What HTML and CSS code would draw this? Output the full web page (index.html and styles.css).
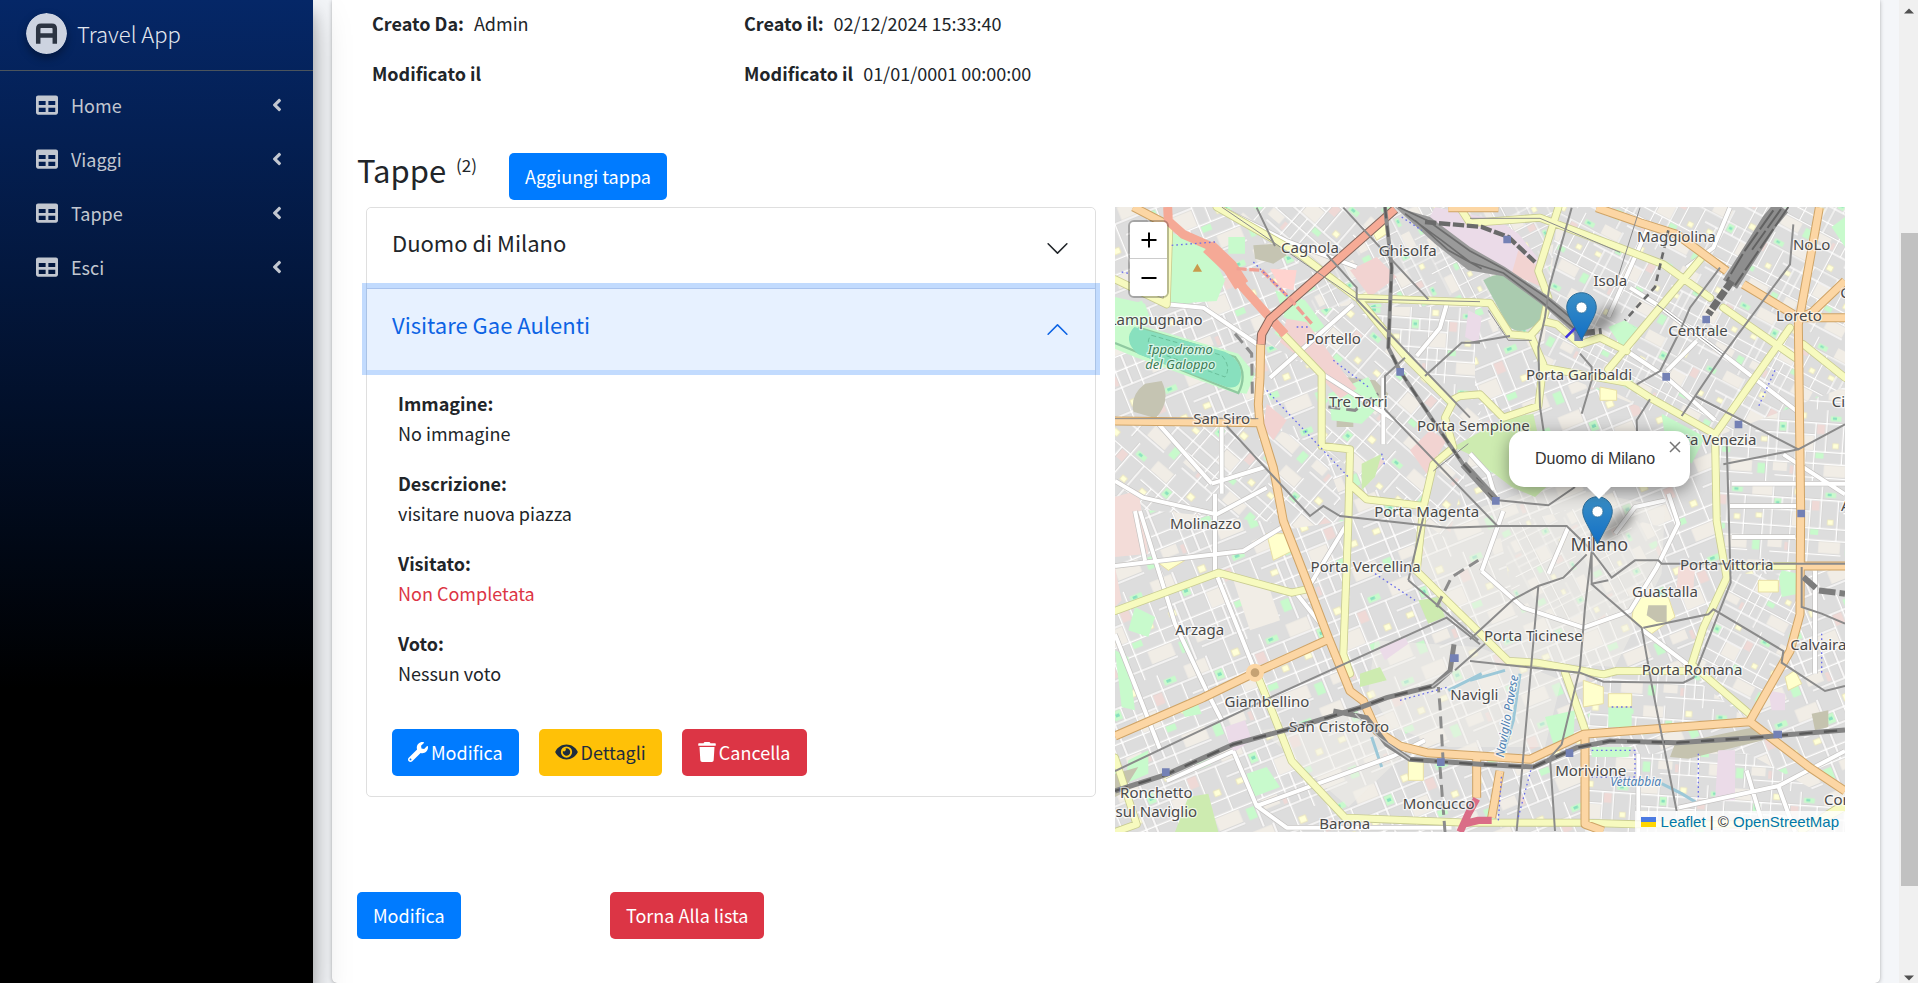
FILE: index.html
```html
<!DOCTYPE html>
<html lang="it">
<head>
<meta charset="utf-8">
<title>Travel App</title>
<link rel="stylesheet" href="styles.css">
</head>
<body>
<svg class="defs" aria-hidden="true">
  <symbol id="i-table" viewBox="0 0 512 512"><path d="M464 32H48C21.5 32 0 53.500 0 80v352c0 26.500 21.500 48 48 48h416c26.500 0 48-21.500 48-48V80c0-26.500-21.500-48-48-48zM224 416H64v-96h160v96zm0-160H64v-96h160v96zm224 160H288v-96h160v96zm0-160H288v-96h160v96z"/></symbol>
  <symbol id="i-left" viewBox="0 0 256 512"><path d="M31.700 239l136-136c9.400-9.400 24.600-9.400 33.900 0l22.600 22.600c9.400 9.400 9.400 24.600 0 33.900L127.900 256l96.400 96.400c9.400 9.400 9.400 24.600 0 33.900L201.700 409c-9.400 9.400-24.600 9.400-33.900 0l-136-136c-9.500-9.400-9.500-24.600-.1-34z"/></symbol>
  <symbol id="i-wrench" viewBox="0 0 512 512"><path d="M507.730 109.100c-2.240-9.030-13.540-12.090-20.120-5.510l-74.360 74.360-67.880-11.310-11.310-67.880 74.360-74.360c6.620-6.620 3.430-17.900-5.660-20.160-47.380-11.740-99.550.91-136.580 37.930-39.640 39.640-50.550 97.100-34.050 147.200L18.740 402.760c-24.990 24.990-24.990 65.510 0 90.500 24.990 24.990 65.510 24.990 90.500 0l213.210-213.210c50.120 16.710 107.470 5.680 147.370-34.220 37.070-37.070 49.700-89.320 37.910-136.730zM64 472c-13.250 0-24-10.750-24-24 0-13.260 10.750-24 24-24s24 10.740 24 24c0 13.250-10.750 24-24 24z"/></symbol>
  <symbol id="i-eye" viewBox="0 0 576 512"><path d="M572.520 241.400C518.290 135.590 410.930 64 288 64S57.680 135.640 3.480 241.410a32.350 32.350 0 0 0 0 29.190C57.710 376.410 165.070 448 288 448s230.320-71.640 284.520-177.410a32.350 32.350 0 0 0 0-29.190zM288 400a144 144 0 1 1 144-144 143.930 143.930 0 0 1-144 144zm0-240a95.310 95.310 0 0 0-25.310 3.790 47.850 47.850 0 0 1-66.900 66.900A95.780 95.780 0 1 0 288 160z"/></symbol>
  <symbol id="i-trash" viewBox="0 0 448 512"><path d="M432 32H312l-9.400-18.700A24 24 0 0 0 281.100 0H166.800a23.720 23.720 0 0 0-21.400 13.300L136 32H16A16 16 0 0 0 0 48v32a16 16 0 0 0 16 16h416a16 16 0 0 0 16-16V48a16 16 0 0 0-16-16zM53.200 467a48 48 0 0 0 47.900 45h245.800a48 48 0 0 0 47.900-45L416 128H32z"/></symbol>
  <symbol id="i-chev" viewBox="0 0 16 16"><path fill-rule="evenodd" d="M1.646 4.646a.5.5 0 0 1 .708 0L8 10.293l5.646-5.647a.5.5 0 0 1 .708.708l-6 6a.5.5 0 0 1-.708 0l-6-6a.5.5 0 0 1 0-.708z"/></symbol>
  <linearGradient id="pinFill" x1="0" y1="0" x2="0" y2="1"><stop offset="0" stop-color="#3a8fc6"/><stop offset="1" stop-color="#126fc6"/></linearGradient>
  <symbol id="i-pin" viewBox="0 0 31 49"><path d="M15.500 .7C7.300.7.700 7.300.700 15.400c0 3.800 1.700 7.500 3.300 10.900L15.500 48 27 26.300c1.600-3.400 3.300-7.100 3.300-10.900C30.300 7.300 23.700.7 15.500.7z" fill="url(#pinFill)" stroke="#2e6c97" stroke-width="1"/><circle cx="15.500" cy="15.500" r="5.500" fill="#fff" stroke="#2e6c97" stroke-width=".8"/></symbol>
</svg>
<div class="shell">
  <aside class="sidebar">
    <a class="brand" href="#">
      <svg class="brand-logo" viewBox="0 0 42 42" aria-hidden="true"><circle cx="21" cy="21" r="21" fill="#cdd3e0"/><path d="M12.500 31.500V16q0-3 3-3h11q3 0 3 3v15.500M12.500 23h17" fill="none" stroke="#2c3442" stroke-width="4.600"/></svg>
      <span>Travel App</span>
    </a>
    <nav class="menu">
      <a href="#"><svg class="m-icon"><use href="#i-table"/></svg><span>Home</span><svg class="m-arrow"><use href="#i-left"/></svg></a>
      <a href="#"><svg class="m-icon"><use href="#i-table"/></svg><span>Viaggi</span><svg class="m-arrow"><use href="#i-left"/></svg></a>
      <a href="#"><svg class="m-icon"><use href="#i-table"/></svg><span>Tappe</span><svg class="m-arrow"><use href="#i-left"/></svg></a>
      <a href="#"><svg class="m-icon"><use href="#i-table"/></svg><span>Esci</span><svg class="m-arrow"><use href="#i-left"/></svg></a>
    </nav>
  </aside>
  <main class="content">
    <section class="card">
      <div class="info">
        <div><b>Creato Da:</b><span>Admin</span></div>
        <div><b>Creato il:</b><span>02/12/2024 15:33:40</span></div>
        <div><b>Modificato il</b></div>
        <div><b>Modificato il</b><span>01/01/0001 00:00:00</span></div>
      </div>
      <div class="heading">
        <h3>Tappe <sup>(2)</sup></h3>
        <a class="btn primary" href="#">Aggiungi tappa</a>
      </div>
      <div class="split">
        <div class="accordion">
          <button class="acc-head" type="button" aria-expanded="false"><span>Duomo di Milano</span><svg><use href="#i-chev"/></svg></button>
          <button class="acc-head open" type="button" aria-expanded="true"><span>Visitare Gae Aulenti</span><svg><use href="#i-chev"/></svg></button>
          <div class="acc-body">
            <dl>
              <dt>Immagine:</dt><dd>No immagine</dd>
              <dt>Descrizione:</dt><dd>visitare nuova piazza</dd>
              <dt>Visitato:</dt><dd class="bad">Non Completata</dd>
              <dt>Voto:</dt><dd>Nessun voto</dd>
            </dl>
            <div class="actions">
              <a class="btn primary" href="#"><svg><use href="#i-wrench"/></svg>Modifica</a>
              <a class="btn warning" href="#"><svg class="eye"><use href="#i-eye"/></svg>Dettagli</a>
              <button class="btn danger" type="button"><svg class="trash"><use href="#i-trash"/></svg>Cancella</button>
            </div>
          </div>
        </div>
        <div class="map">
          <svg class="tiles" viewBox="0 0 2190 1875" preserveAspectRatio="xMidYMid slice" role="img" aria-label="Mappa di Milano">
            <defs>
              <pattern id="f1" width="330" height="270" patternUnits="userSpaceOnUse" patternTransform="rotate(-22)">
                <rect width="330" height="270" fill="#dddddd"/>
                <path fill="#f1ede6" d="M4 4h70v42H4zM150 94h60v52h-60zM250 190h76v44h-76zM70 194h50v30H70z"/>
                <path fill="#c8facc" d="M84 52h28v30H84zM262 20h38v18h-38zM16 202h26v36H16zM216 152h30v20h-30z"/>
                <path fill="#88e0be" d="M90 62h12v10H90zM270 24h14v8h-14z"/>
                <path fill="#ffffd8" stroke="#ece5b4" stroke-width="2" d="M154 14h22v20h-22zM22 108h24v16H22zM276 116h20v18h-20z"/>
                <path fill="#efd9d6" d="M216 52h28v34h-28zM130 204h14v28h-14z"/>
                <path fill="none" stroke="#cfcdcb" stroke-width="8" d="M0 48H330M0 90H212M0 148H330M0 190H330M78 240H330M78 0V190M146 0V270M212 48V270M250 0V148M48 90V270M310 48V190M112 48V90M180 148V240"/>
                <path fill="none" stroke="#fff" stroke-width="5" d="M0 48H330M0 90H212M0 148H330M0 190H330M78 240H330M78 0V190M146 0V270M212 48V270M250 0V148M48 90V270M310 48V190M112 48V90M180 148V240"/>
              </pattern>
              <pattern id="f2" href="#f1" patternTransform="rotate(41) scale(.9)"/>
              <pattern id="f3" href="#f1" patternTransform="rotate(4) scale(.85)"/>
              <pattern id="f4" href="#f1" patternTransform="rotate(28) scale(.8)"/>
              <pattern id="f5" href="#f1" patternTransform="rotate(63) scale(.7)"/>
            </defs>
            <rect width="2190" height="1875" fill="url(#f1)"/>
            <path fill="url(#f2)" d="M300 0H840L440 400 620 500V720L1000 1000 1100 600 720 280zM0 640H435L520 950 0 900zM440 650l180 70 80 220-200 30z"/>
            <path fill="url(#f5)" d="M840 0H1330L1280 380 1165 390 1100 290H730L470 330z"/>
            <path fill="url(#f4)" d="M1330 0H2190V560L1800 690 1280 480z"/>
            <path fill="url(#f3)" d="M1800 690L2190 540V1080H1830zM1450 1400H1720L1900 1540 1410 1590zM1420 1640h480l290 160v75h-780zM720 300h360v250L1000 580z"/>
            <path fill="url(#f4)" d="M1840 1100H2050V1250L1900 1540 1740 1380z"/>
            <path fill="url(#f5)" d="M1150 960L1400 900 1640 960 1600 1120 1420 1260 1200 1200z"/>
            <path fill="#f2efe9" opacity=".5" d="M930 960L1300 830 1650 900 1640 1100 1500 1380 1180 1360 910 1090zM780 1300L1090 1320 1340 1420 1290 1620 1000 1620 830 1560 760 1450zM440 1570L760 1510 860 1650 700 1800 540 1660z"/>
            <!-- land use -->
            <g>
              <path fill="#c8facc" d="M165 75L285 130 330 220 305 282 165 290zM480 250l90 30 60 80-60 30-60-60zM340 90h50v50h-50zM0 270l90 20 20 60-110 30z"/>
              <path fill="#c5c4b2" d="M415 115l70-5 30 35-40 25-55-15zM90 530l50-8q30 60-18 112l-67-20q-10-50 35-84zM690 510l90 10 40 40-20 40-110-40zM665 620h50v40h-50z"/>
              <path fill="#c8facc" d="M0 360L60 350 370 440 420 500 395 560 350 555 60 450 0 425zM640 560l120-50 40 80-60 60-90-10z"/>
              <path fill="none" stroke="#8fc9a0" stroke-width="7" d="M0 408L370 558Q400 500 360 450L70 362"/>
              <path fill="#88e0be" d="M58 360L330 434Q380 460 378 505T335 540L70 442Q20 400 58 360z"/>
              <path fill="none" stroke="#6bbf9b" stroke-width="3" stroke-dasharray="14 8" d="M110 385L320 445Q350 480 330 510L110 430Q90 400 110 385z"/>
              <path fill="#f2d3d1" d="M515 335l60 10 110 150 40 50-50 30-80-90-100-80zM705 190l80-40 60 60-80 60zM455 590l60 50-40 60-30-40zM885 730l60-60 50 30-60 100z"/>
              <path fill="#ffd3cf" d="M465 185l80 5-10 60-40-10z"/>
              <path fill="#ebdbe8" d="M960 0L1150 40 1210 80 1290 180 1260 195 1170 195 1065 140 940 40zM330 1560l60-20 20 60-60 40zM1060 310l40 20-10 80-40-20zM790 1320l80-30 10 20-70 50z"/>
              <path fill="#f2d3d1" d="M1210 130l60 50 10 60-90-40z"/>
              <path fill="#aacbaf" d="M1105 220Q1150 190 1210 210L1290 285Q1290 360 1215 372 1180 370 1165 330z"/>
              <path fill="#cdebb0" d="M1015 720L1165 635 1255 620 1270 690 1305 830 1260 870 1190 840 1060 740z"/>
              <path fill="#c8facc" d="M1640 620L1770 690 1730 770 1650 690zM1480 360l50-20 40 30-50 50zM2150 60l40-30v90zM2000 1090l50 10v60l-50 10-8-60zM1290 1530l90-20-5 90-60 10zM1480 1500h70v60h-70zM1430 1620h120l-10 30h-110zM60 1200l60 30-20 60-60-20zM0 1330l40 20 20 160-40-10zM395 1700l60-20 40 60-80 30zM40 1660l60-30v70l-70 30zM190 1490l50-20 20 50-50 10z"/>
              <path fill="#cdebb0" d="M735 1400l60-20 20 40-80 20zM910 1180l60-10 20 60-50 20zM220 1770l60-10 30 115h-130zM740 770l60-30-20 70-40 40z"/>
              <path fill="#f3dcd8" d="M0 870l70-20 30 190-100 10zM0 1080l20 100-20 20zM1690 1080h50l-5 70h-50z"/>
              <path fill="#ffffcc" stroke="#e8dfa5" stroke-width="3" d="M455 980l60 0 20 50-60 30zM120 1060h90l-50 30zM1560 1170l100 0 20 60-70 50-60-40zM1405 1420l60 20v50l-60 10zM1480 1460h70v40h-70zM1930 1120h60v35h-60zM1455 540l50 10v30h-50zM880 1660h45v60h-45zM2010 1410l30-20 20 40-40 20zM765 60l40-40 10 60-30 20z"/>
              <path fill="#c5c3af" d="M1680 1610L1920 1560 1945 1600 1720 1655 1665 1650zM1600 1195h55v50h-30l-30-20zM2090 1520l50-10v50l-40 10zM0 1700l70-20-50 80-20 10z"/>
              <path fill="#f1ede6" d="M355 1120l110 30 30 90-90 30z"/>
              <path fill="#ebdbe8" d="M1810 1630h50v150h-60zM1960 1450l50 10v50h-40z"/>
            </g>
            <g fill="none" stroke="#9cc8d8" stroke-width="9"><path d="M1065 1420L1170 1390M1000 1450L1100 1400M1100 1290L1180 1360M1640 1730L1700 1760 1750 1790M770 1590L800 1680M1215 1400L1195 1540 1160 1660"/></g>
            <!-- secondary streets -->
            <g fill="none" stroke-linejoin="round">
              <g stroke="#c4c2c0" stroke-width="16"><use href="#wr"/></g>
              <g stroke="#fff" stroke-width="12"><path id="wr" d="M0 1077L385 1032 515 952M75 912L180 1250 275 1452 320 1540M0 1282L135 1627M300 860V1092L420 1392M425 1797L835 1647 930 1600M355 1632L425 1797 515 1862H1010M155 1722L355 1632M155 292L265 302 435 417M465 512L715 292M335 12L515 102 725 180M0 822L85 872 305 922 455 842M905 447L975 362 995 292M805 712V512M1545 242L1625 292 1825 442 2045 612M1745 402L1655 492M1535 432L1655 512 1800 640M2005 742L2190 862M1845 2L1795 122 1715 182M1845 897H2065M1100 1092L1225 1202 1405 1262 1545 1212 1625 1082 1690 950 1660 860M1690 1802L1990 1737 2190 1632M1580 1267L1730 1382M1165 912L1100 1092M1065 740L1120 800 1135 850M575 1150L690 960M545 1160L640 1280M1990 1737L2040 1875M1895 1690L1950 1875M320 660V860M130 650L290 830M290 830L450 780M1600 60L1480 330M2100 1090V1400M1850 830H2190M1850 990H2040M60 912L90 1060M620 500L840 640M1360 960L1300 1100M1650 880L1560 900 1500 980M1570 1640V1875"/></g>
            </g>
            <!-- yellow roads -->
            <g fill="none" stroke-linejoin="round" stroke-linecap="round">
              <g stroke="#c9cc92" stroke-width="24"><use href="#yr"/></g>
              <g stroke="#f7fabf" stroke-width="19"><path id="yr" d="M305 0L555 142 725 272 1125 288 1185 382 1245 387 1285 342 1325 352 1395 412 1455 392 1535 432M735 282L875 452 1005 582 1035 567 1095 562 1165 632 1270 597 1285 472 1250 392M1035 2L1065 48 1275 32 1515 122 1645 172 1785 272M1825 302L2040 452M2065 412L2190 512M1330 2L1270 192 1300 272 1285 342M1760 152L1480 487M1285 482L1535 527 1605 572 1800 682 1805 942 1835 1112 1765 1262 1730 1372 1905 1522M1800 682L2025 362M905 1092L1180 1362 1265 1367 1465 1402 1505 1392H1745M1350 1397L1415 1582M1015 582L990 632 1015 722 955 772 925 902 905 1092M505 382L620 502V717L705 727 700 942 685 1342 705 1400M705 832L755 877 925 897M0 1212L310 1097 530 1157 575 1147M430 1412L475 1522 530 1662 690 1832 1055 1847 1405 1847 1565 1852 2100 1852 2190 1800M0 1652L65 1852 0 1875M0 217L155 292 163 52M2055 1077H1835M2060 1870L2190 1790"/></g>
            </g>
            <!-- primary roads -->
            <g fill="none" stroke-linejoin="round">
              <g stroke="#cfa467" stroke-width="27"><use href="#or"/></g>
              <g stroke="#fcd6a4" stroke-width="21"><path id="or" d="M437 412L435 512 430 592 435 652 475 782 505 942 575 1122 640 1292 705 1452 745 1482 785 1572 855 1617 935 1637 1095 1647 1245 1657 1405 1582 1665 1562 1905 1544 2085 1682 2190 1752M0 1587L265 1472 420 1397 640 1297M1905 1542L2025 1332 2055 1222 2057 912 2055 752 2050 352 2113 2M1445 2L1575 47 1685 82 1835 192M1885 232L2035 322M2050 332H2190M2050 332L2090 317 2190 222M0 642L435 647M55 0L155 52M1410 1582V1852L1465 1872M2055 1077H2190M1085 1650V1772M1155 1692L1130 1832M1000 2H1150"/></g>
              <circle cx="420" cy="1397" r="20" fill="#c5a274" stroke="#fcd6a4" stroke-width="14"/>
              <path stroke="#f5a996" stroke-width="27" d="M158 0L160 42 205 82 285 117 335 167 385 242 465 332 510 382"/>
              <path stroke="#f5a996" stroke-width="46" d="M280 118L345 180 380 235"/>
              <path stroke="#82655c" stroke-width="28" d="M840 7L465 337 440 382 438 412"/>
              <path stroke="#f6ab96" stroke-width="22" d="M840 7L465 337 440 382 438 412"/>
              <path stroke="#f0a195" stroke-width="10" stroke-dasharray="30 8" d="M365 185L440 190 520 270 590 350"/>
              <path stroke="#da6d87" stroke-width="22" d="M1035 1875L1060 1820 1085 1775M1050 1850L1090 1840H1130"/>
            </g>
            <!-- railways -->
            <g fill="none" stroke="#858585">
              <path fill="#9a9a9a" stroke="none" d="M840 0L945 30 1065 120 1170 180 1300 268 1410 355 1430 385 1380 382 1290 300 1165 208 1060 190 960 110z"/>
              <path stroke="#6d6d6d" stroke-width="5" d="M850 0L940 42 1065 132 1165 185 1295 272 1400 360M870 20L980 100 1065 165 1165 198 1280 285 1390 375M900 40L1000 130 1100 185"/>
              <path stroke="#6a6a6a" stroke-width="13" stroke-dasharray="34 8" d="M930 45L1100 60 1180 90 1260 165"/>
              <path stroke="#6a6a6a" stroke-width="8" stroke-dasharray="20 14" d="M1660 70L1620 240 1530 340"/>
              <path stroke="#8c8c8c" stroke-width="12" d="M810 0L830 182 820 422 855 492 955 642 1045 772"/>
              <path stroke="#8a8a8a" stroke-width="22" d="M1045 772L1145 882"/>
              <path stroke="#5f5f5f" stroke-width="7" stroke-dasharray="34 22" d="M810 0L830 182 820 422 855 492 955 642 1045 772 1145 882"/>
              <path stroke="#8e8e8e" stroke-width="50" d="M2000 0L1965 42 1915 122 1845 232"/>
              <path stroke="#6e6e6e" stroke-width="22" stroke-dasharray="30 6" d="M1850 222L1780 322"/>
              <path stroke="#626262" stroke-width="6" stroke-dasharray="70 10" d="M2020 0L1935 125 1860 235M1975 10L1890 130 1835 222M1998 6L1910 130"/>
              <path stroke="#858585" stroke-width="15" d="M0 1752L155 1702 355 1612 555 1557 735 1502 815 1472 955 1437 1005 1392 1017 1312M655 1512L755 1532 815 1612 885 1657 1095 1672 1255 1680 1385 1622 1485 1602 1685 1607 1915 1592 2190 1569"/>
              <path stroke="#585858" stroke-width="7" stroke-dasharray="40 34" d="M0 1752L155 1702 355 1612 555 1557 735 1502 815 1472 955 1437M885 1657L1095 1672 1255 1680 1385 1622 1485 1602 1685 1607 1915 1592 2190 1569"/>
              <path stroke="#c4c4c4" stroke-width="4" d="M720 1520L790 1590 885 1657M950 1440L1010 1395"/>
              <path stroke="#7d7d7d" stroke-width="18" stroke-dasharray="50 12" d="M1390 380L1460 372M2065 1110L2110 1150 2190 1160"/>
              <path stroke="#8c8c8c" stroke-width="9" stroke-dasharray="36 18" d="M360 380L410 440 412 560M985 1672L975 1500 970 1440M975 1680L990 1875M640 600L720 610 790 560M965 1200L1010 1110 1090 1060"/>
            </g>
            <g fill="none" stroke="#8b8b8b" stroke-width="6">
              <path d="M335 657L585 927 625 897 675 927 995 962 1155 957 1355 957 1430 1030M0 1692L465 1472 995 1232 1095 1312M1370 2L1303 240 1290 330 1270 420 1275 600 1290 700M1430 1032L1410 1202 1395 1382 1340 1612 1305 1652 1320 1872M1270 1137L1250 1362 1205 1872M1430 1132L1580 1262 1610 1432 1685 1812M1415 1042L1345 1112 1270 1137 1195 1177 1065 1297M1585 1262L1780 1222 1795 1207 2005 1332 2000 1367 2130 1452 2190 1437M1835 700L1847 1127 1735 1412 1705 1427 1465 1424 1395 1397 1065 1362M2035 52L2025 172 1825 442 1700 627M1815 182L1725 302 1695 372 1635 492 1565 532M1740 567L2050 727 2190 652M2050 727L1825 772M1065 407L1185 387M425 2L480 117M685 2L940 277M635 142L725 242V277L1065 632M1095 407H1040L930 507M870 452L810 507V607L1150 960M1430 960V1032L1490 1112 1560 1060H1630L1640 1070H2190M1065 800L1150 880 1300 895 1380 840M2060 1080V1200L2120 1220 2190 1250M1395 440L1430 480V520L1400 620M1605 577L1565 640 1570 780M880 1120L930 910M880 1120L1090 1300M1020 1390L1110 1310M1430 1030V1130L1480 1120"/>
              <path stroke-width="3" d="M1065 34H1275L1515 136M1120 310L1180 400 1250 400M955 792L1060 710M1575 2L1500 240M0 635H430M1700 627L1740 567M1625 292L1825 442M1095 284L725 276 320 0"/>
            </g>
            <g fill="none" stroke="#6a6eea" stroke-width="4" stroke-dasharray="5 9"><path d="M170 115L300 105M20 195L45 200M415 165L520 270M455 550L700 810M545 360H580M1210 1830L1250 1680M1430 1630H1560V1710H1430M1490 1500H1550M1750 1640V1780M860 30L920 70M655 460L760 540M800 740L810 780M1980 490L1930 600M780 1100L900 1180M855 1480L1000 1440M1150 1840L1160 1700M2120 1280V1400"/></g>
            <path stroke="#3f35df" stroke-width="8" d="M1352 392L1382 362"/>
            <g fill="#7481b5"><path d="M844 483h23v23h-23zM1165 86h23v23h-23zM1762 326h23v23h-23zM1642 498h23v23h-23zM1859 641h23v23h-23zM1131 870h23v23h-23zM2047 908h23v23h-23zM1005 1342h26v23h-26zM141 1684h23v23h-23zM966 1654h23v23h-23zM1352 1627h23v23h-23zM1975 1571h26v23h-26zM1378 372h26v30h-26z"/></g>
            <path fill="#c99a4d" d="M233 194l14-24 14 24z"/>
            <g class="labels">
              <text x="585" y="138">Cagnola</text><text x="878" y="148">Ghisolfa</text>
              <text x="1684" y="104">Maggiolina</text><text x="2090" y="129">NoLo</text>
              <text x="1486" y="238">Isola</text><text x="1749" y="388">Centrale</text><text x="2052" y="343">Loreto</text>
              <text x="122" y="353">Lampugnano</text><text x="655" y="410">Portello</text>
              <text x="1392" y="518">Porta Garibaldi</text><text x="730" y="599">Tre Torri</text>
              <text x="320" y="651">San Siro</text><text x="1075" y="672">Porta Sempione</text>
              <text x="1780" y="713">Porta Venezia</text><text x="935" y="930">Porta Magenta</text>
              <text x="272" y="967">Molinazzo</text><text x="752" y="1094">Porta Vercellina</text>
              <text x="1835" y="1090">Porta Vittoria</text><text x="1650" y="1170">Guastalla</text>
              <text x="254" y="1285">Arzaga</text><text x="1255" y="1302">Porta Ticinese</text>
              <text x="1731" y="1404">Porta Romana</text><text x="456" y="1499">Giambellino</text>
              <text x="1078" y="1478">Navigli</text><text x="672" y="1575">San Cristoforo</text>
              <text x="1427" y="1707">Morivione</text><text x="971" y="1805">Moncucco</text>
              <text x="124" y="1773">Ronchetto</text><text x="124" y="1831">sul Naviglio</text>
              <text x="689" y="1867">Barona</text>
              <text class="start" x="2026" y="1329">Calvairate</text><text class="start" x="2127" y="1793">Corvetto</text>
              <text class="start" x="2150" y="599">Città</text><text class="start" x="2176" y="274">C</text><text class="start" x="2178" y="911">A</text>
              <text class="city" x="1453" y="1032">Milano</text>
              <text class="park" x="196" y="440">Ippodromo</text><text class="park" x="196" y="485">del Galoppo</text>
              <text class="water" x="1562" y="1738">Vettabbia</text>
              <text class="water" transform="translate(1188 1530) rotate(-80)">Naviglio Pavese</text>
            </g>
          </svg>
          <div class="zoom"><button type="button" aria-label="Zoom avanti"><svg viewBox="0 0 18 18"><path d="M9 1.500v15M1.500 9h15"/></svg></button><button type="button" aria-label="Zoom indietro"><svg viewBox="0 0 18 18"><path d="M1.500 9h15"/></svg></button></div>
          <i class="shade s-isola"></i>
          <svg class="pin isola"><use href="#i-pin"/></svg>
          <i class="shade s-duomo"></i>
          <svg class="pin duomo"><use href="#i-pin"/></svg>
          <div class="popup">Duomo di Milano<button type="button" aria-label="Chiudi"><svg viewBox="0 0 12 12"><path d="M1 1l10 10M11 1L1 11"/></svg></button></div>
          <div class="credit"><svg viewBox="0 0 15 10"><path fill="#4c7be1" d="M0 0h15v5H0z"/><path fill="#ffd500" d="M0 5h15v5H0z"/></svg><a href="#">Leaflet</a> | © <a href="#">OpenStreetMap</a></div>
        </div>
      </div>
      <div class="footer-actions">
        <div><a class="btn primary" href="#">Modifica</a></div>
        <div><a class="btn danger" href="#">Torna Alla lista</a></div>
      </div>
    </section>
  </main>
  <div class="scrollbar" aria-hidden="true">
    <svg viewBox="0 0 10 6"><path d="M0 5.500L5 .5l5 5z"/></svg>
    <div class="track"><div class="thumb"></div></div>
    <svg viewBox="0 0 10 6"><path d="M0 .5h10l-5 5z"/></svg>
  </div>
</div>
</body>
</html>
```
FILE: styles.css
```css
* { box-sizing: border-box; }
body {
  margin: 0;
  background: #f4f6f9;
  color: #212529;
  font-family: "Noto Sans CJK JP", "Noto Sans", sans-serif;
  font-size: 18px;
  line-height: 30px;
}
a { text-decoration: none; }
button { font: inherit; cursor: pointer; }
.defs { position: absolute; width: 0; height: 0; }
.shell { display: flex; min-height: 100vh; }

.sidebar {
  flex: 0 0 313px;
  position: relative;
  z-index: 1;
  background: linear-gradient(180deg, rgb(5, 39, 103) 0%, #000 70%);
  box-shadow: 0 18px 35px rgba(0, 0, 0, .25), 0 13px 13px rgba(0, 0, 0, .22);
}
.brand {
  display: flex;
  align-items: center;
  gap: 10px;
  height: 71px;
  padding: 0 26px 4px;
  border-bottom: 1px solid #4b545c;
  color: #e3e8f0;
  font-size: 22px;
  font-weight: 300;
}
.brand-logo { width: 41px; height: 41px; border-radius: 50%; box-shadow: 0 4px 8px rgba(0, 0, 0, .35); }
.menu { padding: 9px 10px 0; }
.menu a {
  display: flex;
  align-items: center;
  height: 50px;
  margin-bottom: 4px;
  padding: 0 21px 0 26px;
  color: #c2c7d0;
}
.m-icon { width: 22px; height: 22px; margin-right: 13px; fill: currentColor; }
.m-arrow { width: 10px; height: 20px; margin-left: auto; fill: currentColor; }

.content { flex: 1; min-width: 0; padding: 0 19px 1px 19px; }
.card {
  min-height: 982px;
  padding: 8px 0 44px;
  background: #fff;
  border-radius: 0 0 5px 5px;
  box-shadow: 0 0 1px rgba(0, 0, 0, .2), 0 1px 4px rgba(0, 0, 0, .25);
}
.info {
  display: grid;
  grid-template-columns: repeat(4, 1fr);
  row-gap: 20px;
  padding: 0 20px 0 40px;
}
.info div:nth-child(odd) { grid-column: 1; }
.info b { margin-right: 10px; }
.heading { display: flex; align-items: flex-end; gap: 32px; padding: 64px 25px 7px; }
.heading h3 { margin: 0 0 12px; font-size: 31px; font-weight: 400; line-height: 36px; }
.heading sup { font-size: 17px; line-height: 0; vertical-align: 11px; margin-left: 3px; }

.btn {
  display: inline-flex;
  align-items: center;
  height: 47px;
  padding: 0 16px 2px;
  border: 0;
  border-radius: 5px;
  color: #fff;
  white-space: nowrap;
}
.btn svg { width: 20px; height: 20px; margin-right: 3px; fill: currentColor; }
.btn .eye { width: 23px; }
.btn .trash { width: 18px; }
.primary { background: #007bff; }
.warning { background: #ffc107; color: #1f2d3d; }
.danger { background: #dc3545; }

.split {
  display: grid;
  grid-template-columns: 1fr 1fr;
  gap: 19px;
  align-items: start;
  padding: 0 35px 0 34px;
}
.accordion { border: 1px solid #dfdfdf; border-radius: 5px; }
.acc-head {
  display: flex;
  align-items: center;
  justify-content: space-between;
  width: 100%;
  height: 80px;
  padding: 0 25px;
  border: 0;
  border-radius: 5px 5px 0 0;
  background: #fff;
  color: #212529;
  font-size: 22px;
}
.acc-head span { padding-bottom: 12px; }
.acc-head svg { width: 25px; height: 25px; fill: currentColor; }
.acc-head.open {
  position: relative;
  height: 82px;
  border-top: 1px solid #a9c3ee;
  border-radius: 0;
  background: #e7f1ff;
  color: #0c63e4;
  box-shadow: 0 0 0 5px rgba(13, 110, 253, .25);
}
.acc-head.open svg { transform: rotate(180deg); }
.acc-body { padding: 18px 25px 20px; }
.acc-body dl { margin: 0 0 41px; padding-left: 6px; }
.acc-body dt { font-weight: 700; }
.acc-body dd { margin: 0 0 20px; }
.acc-body dd:last-child { margin-bottom: 0; }
.acc-body .bad { color: #dc3545; }
.actions { display: flex; gap: 20px; }
.footer-actions {
  display: grid;
  grid-template-columns: repeat(6, 1fr);
  padding: 60px 5px 0 25px;
}

.map {
  position: relative;
  height: 625px;
  overflow: hidden;
  font-family: "Liberation Sans", Arial, sans-serif;
}
.tiles { display: block; width: 100%; height: 100%; }
.labels text {
  font-family: "Noto Sans", sans-serif;
  font-size: 45px;
  text-anchor: middle;
  fill: #4a4a4a;
  stroke: rgba(255, 255, 255, .65);
  stroke-width: 8px;
  stroke-linejoin: round;
  paint-order: stroke;
}
.labels .start { text-anchor: start; }
.labels .city { font-size: 54px; }
.labels .park { font-size: 39px; font-style: italic; fill: #3c7d55; }
.labels .water { font-size: 36px; font-style: italic; fill: #4d80b3; }
.zoom {
  position: absolute;
  top: 13px;
  left: 13px;
  border: 2px solid rgba(0, 0, 0, .25);
  border-radius: 6px;
  background-clip: padding-box;
}
.zoom button {
  display: grid;
  place-items: center;
  width: 37px;
  height: 37px;
  padding: 0;
  border: 0;
  border-radius: 0 0 4px 4px;
  background: #fff;
}
.zoom button:first-child { border-bottom: 1px solid #ccc; border-radius: 4px 4px 0 0; }
.zoom svg { width: 18px; height: 18px; stroke: #000; stroke-width: 2; }
.pin { position: absolute; width: 31px; height: 49px; }
.isola { left: 451px; top: 85px; }
.duomo { left: 467px; top: 289px; }
.shade {
  position: absolute;
  width: 44px;
  height: 16px;
  border-radius: 50%;
  background: rgba(0, 0, 0, .35);
  filter: blur(5px);
  transform: rotate(-42deg);
}
.s-isola { left: 464px; top: 106px; }
.s-duomo { left: 480px; top: 310px; }
.popup {
  position: absolute;
  left: 394px;
  top: 224px;
  padding: 13px 35px 13px 26px;
  border-radius: 15px;
  background: #fff;
  box-shadow: 0 4px 17px rgba(0, 0, 0, .4);
  color: #333;
  font-size: 16px;
  white-space: nowrap;
}
.popup::after {
  content: "";
  position: absolute;
  left: 78px;
  top: 100%;
  border: 12px solid transparent;
  border-top-color: #fff;
  border-bottom: 0;
}
.popup button {
  position: absolute;
  top: 4px;
  right: 3px;
  display: grid;
  place-items: center;
  width: 24px;
  height: 24px;
  padding: 0;
  border: 0;
  background: none;
}
.popup button svg { width: 12px; height: 12px; stroke: #757575; stroke-width: 1.500; }
.credit {
  position: absolute;
  right: 0;
  bottom: 0;
  padding: 0 6px;
  background: rgba(255, 255, 255, .8);
  color: #333;
  font-size: 15px;
  line-height: 21px;
  white-space: nowrap;
}
.credit a { color: #0078a8; }
.credit svg { width: 15px; height: 10px; margin-right: 5px; }

.scrollbar {
  flex: 0 0 19px;
  display: flex;
  flex-direction: column;
  align-items: center;
  padding: 8px 0 3px;
  background: #f0f0f0;
}
.scrollbar > svg { width: 10px; height: 6px; fill: #505050; }
.track { flex: 1; width: 100%; padding-left: 2px; display: flex; flex-direction: column; justify-content: flex-end; }
.thumb { height: 68%; margin-bottom: 89px; background: #c1c1c1; }
```
